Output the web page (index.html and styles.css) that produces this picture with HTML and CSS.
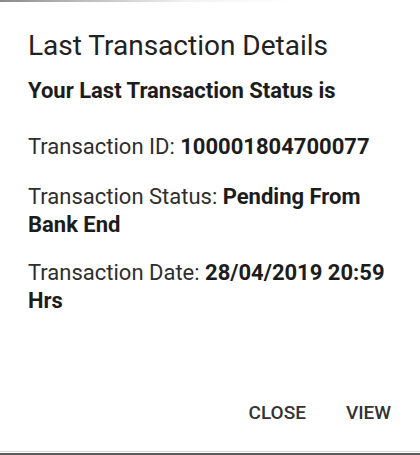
FILE: index.html
```html
<!DOCTYPE html>
<html>
<head>
<meta charset="utf-8">
<link rel="stylesheet" href="styles.css">
</head>
<body>
<div class="screen">
  <div class="topline"></div>
  <div class="dialog">
    <h1 class="title">Last Transaction Details</h1>
    <p class="subtitle">Your Last Transaction Status is</p>
    <p class="row row-id">Transaction ID: <b>100001804700077</b></p>
    <p class="row row-status">Transaction Status: <b>Pending From Bank End</b></p>
    <p class="row row-date">Transaction Date: <b>28/04/2019 20:59 Hrs</b></p>
    <div class="actions">
      <span class="btn">CLOSE</span>
      <span class="btn">VIEW</span>
    </div>
  </div>
  <div class="bottomline"></div>
</div>
</body>
</html>
```

FILE: styles.css
```css
html, body {
  margin: 0;
  padding: 0;
  background: #fff;
}
.screen {
  width: 420px;
  height: 455px;
  display: flex;
  flex-direction: column;
  font-family: Roboto, "Liberation Sans", sans-serif;
  color: #1f1f1f;
}
.topline {
  height: 2px;
  background: linear-gradient(to right, #8a8a8a 0%, #bdbdbd 20%, #f2f2f2 45%, #ffffff 70%);
  flex: none;
}
.dialog {
  flex: 1;
  display: flex;
  flex-direction: column;
  padding: 0 24px 0 28px;
}
.title {
  margin: 28px 0 0;
  font-size: 28px;
  line-height: 32px;
  font-weight: 400;
  color: #212121;
}
.subtitle {
  margin: 15px 0 0;
  font-size: 22px;
  line-height: 27px;
  font-weight: 700;
  color: #1c1c1c;
}
.row {
  margin: 0;
  font-size: 22px;
  line-height: 28px;
  font-weight: 400;
  color: #2e2e2e;
}
.row b {
  font-weight: 700;
  color: #1c1c1c;
}
.row-id { margin-top: 29px; }
.row-status { margin-top: 22px; }
.row-date { margin-top: 20px; }
.actions {
  margin-top: auto;
  margin-bottom: 27px;
  display: flex;
  justify-content: flex-end;
  gap: 40px;
  padding-right: 5px;
}
.btn {
  font-size: 19px;
  line-height: 22px;
  font-weight: 500;
  color: #333;
}
.bottomline {
  flex: none;
  height: 4px;
  background: linear-gradient(to bottom, #d6d6d6 0 1px, #fff 1px 2px, #5a5a5a 2px 4px);
}
```
